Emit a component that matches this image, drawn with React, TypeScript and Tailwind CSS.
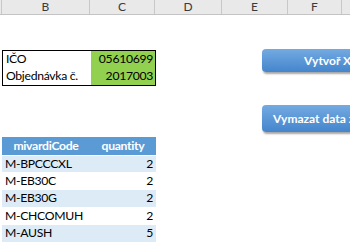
import React from 'react'

const columns = [
  { id: 'A', width: 'w-[2px]', label: '' },
  { id: 'B', width: 'w-[88px]', label: 'B' },
  { id: 'C', width: 'w-[65px]', label: 'C' },
  { id: 'D', width: 'w-[67px]', label: 'D' },
  { id: 'E', width: 'w-[66px]', label: 'E' },
  { id: 'F', width: 'w-[54px]', label: 'F' },
]

const items = [
  { code: 'M-BPCCCXL', qty: 2 },
  { code: 'M-EB30C', qty: 2 },
  { code: 'M-EB30G', qty: 2 },
  { code: 'M-CHCOMUH', qty: 2 },
  { code: 'M-AUSH', qty: 5 },
  { code: '', qty: null },
]

const App = () => {
  return (
    <div className="relative w-[350px] h-[244px] overflow-hidden bg-white font-['Lato','Liberation_Sans',sans-serif] text-[12.2px] tracking-[-0.3px] text-black">
      {/* Column headers */}
      <div className="flex h-[15px] bg-[#E9E9E9] border-b border-[#C4C4C4] tracking-normal">
        {columns.map((col) => (
          <div
            key={col.id}
            className={`${col.width} shrink-0 border-r border-[#C8C8C8] flex items-center justify-center text-[12px] leading-none text-[#3a3a3a]`}
          >
            {col.label}
          </div>
        ))}
        <div className="flex-1" />
      </div>

      {/* Sheet body */}
      <div className="pl-[2px]">
        <div className="h-[34.8px]" />

        {/* ICO / order table */}
        <div className="w-[154px] border border-black">
          <div className="flex h-[17px] items-center">
            <div className="w-[88px] pl-[3px]">IČO</div>
            <div className="flex-1 h-full bg-[#92D050] flex items-center justify-end pr-[2px]">05610699</div>
          </div>
          <div className="flex h-[17px] items-center">
            <div className="w-[88px] pl-[3px]">Objednávka č.</div>
            <div className="flex-1 h-full bg-[#92D050] flex items-center justify-end pr-[2px]">2017003</div>
          </div>
        </div>

        <div className="h-[51.4px]" />

        {/* Items table */}
        <div className="w-[154px]">
          <div className="flex h-[17.4px] items-center bg-[#5B9BD5] text-white font-bold">
            <div className="w-[88px] text-center">mivardiCode</div>
            <div className="flex-1 text-center">quantity</div>
          </div>
          {items.map((item, i) => (
            <div
              key={i}
              className={`flex h-[17.4px] items-center border-t border-white ${i % 2 === 0 ? 'bg-[#DDEBF7]' : 'bg-white'}`}
            >
              <div className="w-[88px] pl-[3px]">{item.code}</div>
              <div className="flex-1 text-right pr-[3px]">{item.qty}</div>
            </div>
          ))}
        </div>
      </div>

      {/* Macro buttons */}
      <div className="absolute left-[262px] top-[49px] w-[150px] h-[23px] rounded-[4px] bg-gradient-to-b from-[#73AAE1] to-[#4485CC] shadow-[1px_2px_2px_rgba(0,0,0,0.35)] flex items-center pl-[42px] text-white font-bold text-[12px] tracking-normal">
        Vytvoř XML
      </div>
      <div className="absolute left-[262px] top-[105px] w-[150px] h-[27px] rounded-[4px] bg-gradient-to-b from-[#73AAE1] to-[#4485CC] shadow-[1px_2px_2px_rgba(0,0,0,0.35)] flex items-center pl-[11px] text-white font-bold text-[12px] tracking-normal">
        Vymazat data z XML
      </div>
    </div>
  )
}

export default App
